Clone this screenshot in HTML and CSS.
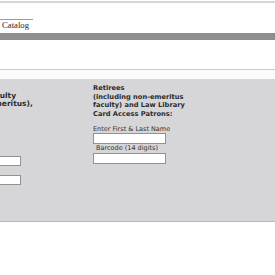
FILE: index.html
```html
<!DOCTYPE html>
<html lang="en">
<head>
  <meta charset="UTF-8">
  <meta name="viewport" content="width=device-width, initial-scale=1.0">
  <title>Library Catalog - Login</title>
  <link rel="stylesheet" href="styles.css">
</head>
<body>
  <div class="top-rule"></div>
  <div class="header">
    <div class="tab">Catalog</div>
  </div>
  <div class="navbar"></div>
  <div class="spacer"></div>
  <div class="rule"></div>
  <div class="gap"></div>

  <!-- Login panel -->
  <div class="panel">
    <div class="col col-left">
      <p class="heading">Faculty<br>(emeritus),</p>
      <div class="fields">
        <input type="text" class="field">
        <input type="password" class="field field-second">
      </div>
    </div>
    <div class="col col-right">
      <p class="heading">Retirees<br>(including non-emeritus<br>faculty) and Law Library<br>Card Access Patrons:</p>
      <label class="label" for="name">Enter First &amp; Last Name</label>
      <input type="text" class="field field-wide" id="name">
      <label class="label label-indent" for="barcode">Barcode (14 digits)</label>
      <input type="text" class="field field-wide" id="barcode">
    </div>
  </div>
</body>
</html>
```

FILE: styles.css
```css
/* Basic layout */
body {
  margin: 0;
  padding: 0;
  background: #fff;
  font-family: "DejaVu Sans", Verdana, sans-serif;
  color: #222;
  overflow: hidden;
}
.top-rule {
  margin-top: 1px;
  border-top: 2px solid #d6d6d6;
}
.header {
  height: 14px;
  padding-top: 16px;
}
.tab {
  width: 31px;
  padding-left: 2px;
  border-top: 1px solid #9a9a9a;
  font-family: "Liberation Serif", serif;
  font-size: 8.7px;
  line-height: 10px;
  color: #222;
}
.navbar {
  height: 7px;
  background: #8e8e8e;
}
.spacer {
  height: 29px;
}
.rule {
  border-top: 1px solid #cbcbcb;
}
.gap {
  height: 9px;
  background: #fbfbfb;
}

/* Grey login panel */
.panel {
  display: flex;
  height: 142px;
  background: #d6d6d8;
  border-bottom: 1px solid #b9b9bb;
}
.col {
  padding-top: 5px;
}
.col-left {
  flex: 0 0 109px;
  margin-left: -16px;
}
.col-right {
  flex: 1;
}
.heading {
  margin: 0;
  font-size: 6.7px;
  font-weight: bold;
  line-height: 8.5px;
  color: #2d2d2d;
}
.col-left .heading {
  padding-top: 8px;
  padding-left: 1.5px;
  font-size: 7.5px;
  line-height: 7.5px;
}
.fields {
  margin-top: 49px;
}
.field {
  display: block;
  box-sizing: border-box;
  width: 37px;
  height: 10px;
  margin: 0;
  padding: 0;
  border: 1px solid #929292;
  background: #fff;
}
.field-second {
  margin-top: 9px;
}
.field-wide {
  width: 73px;
  height: 11px;
}
.label {
  display: block;
  font-size: 6.5px;
  line-height: 8px;
  color: #333;
}
.col-right .heading {
  margin-bottom: 7px;
}
.label-indent {
  padding-left: 3px;
  line-height: 8.5px;
}
```
